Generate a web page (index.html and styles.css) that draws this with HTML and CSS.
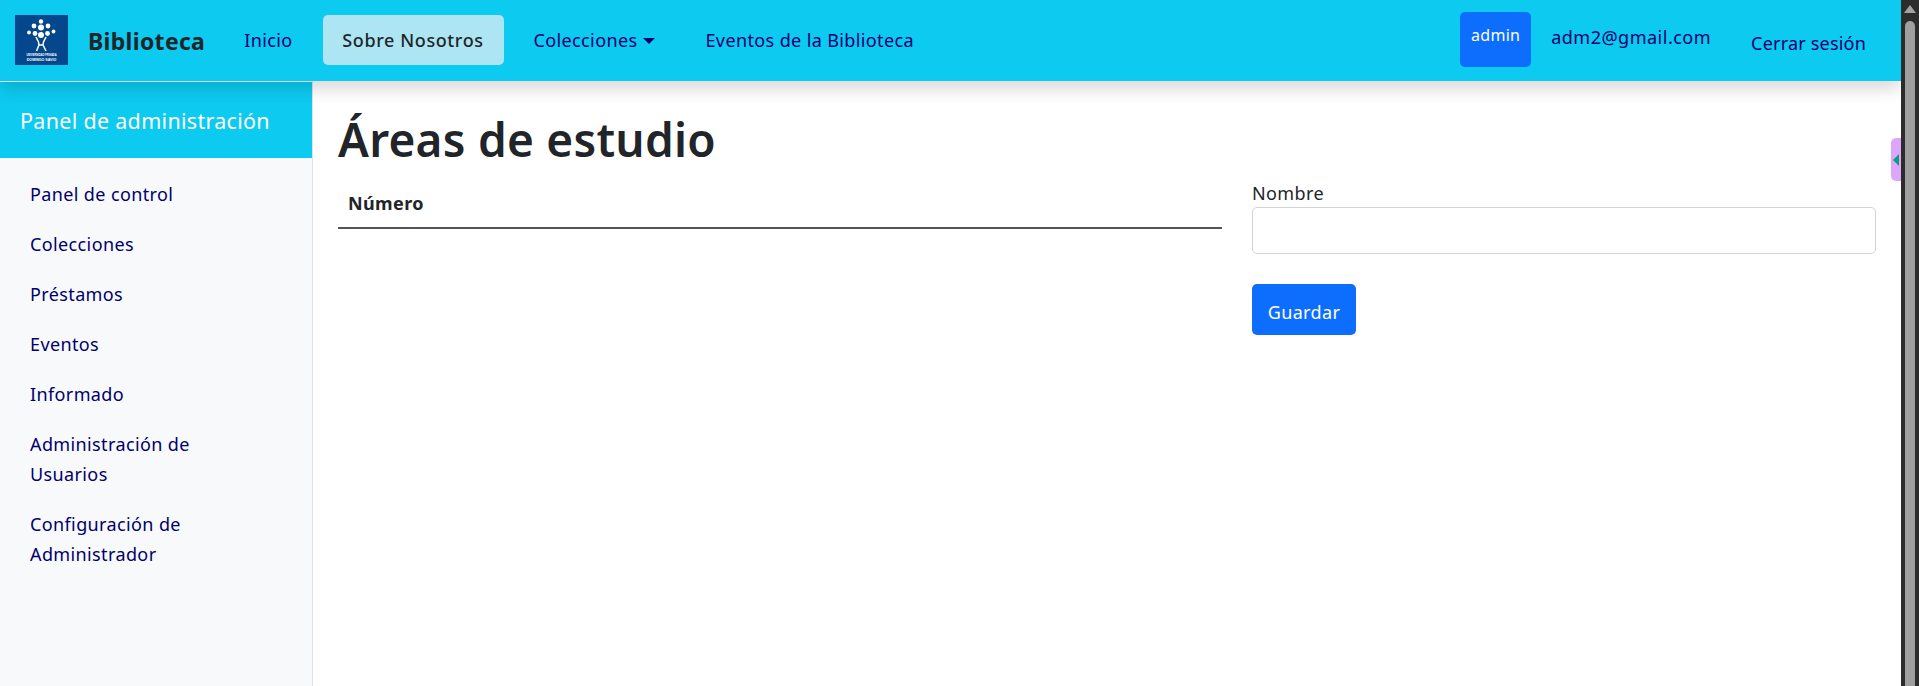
FILE: index.html
```html
<!DOCTYPE html>
<html lang="es">
<head>
<meta charset="utf-8">
<title>Áreas de estudio</title>
<link rel="stylesheet" href="styles.css">
</head>
<body>
<div class="shell">
  <div class="page">
    <header class="navbar">
      <svg class="logo" viewBox="0 0 53 50" role="img" aria-label="Universidad Privada Domingo Savio">
        <rect width="53" height="50" fill="#04478c"/>
        <g fill="#fff">
          <circle cx="26" cy="6.5" r="2.2"/>
          <circle cx="19" cy="11" r="2.4"/><circle cx="26" cy="12.5" r="3"/><circle cx="33" cy="11" r="2.4"/>
          <circle cx="14" cy="17.5" r="1.9"/><circle cx="20" cy="18.5" r="2.4"/><circle cx="26" cy="20" r="3"/><circle cx="32.5" cy="18.5" r="2.4"/><circle cx="38.5" cy="16.5" r="1.9"/>
          <text class="logo-a" x="26.5" y="40.5" text-anchor="middle">UNIVERSIDAD PRIVADA</text>
          <text class="logo-b" x="26.5" y="45.5" text-anchor="middle">DOMINGO SAVIO</text>
        </g>
        <path d="M21 22l2.5 5 .5 3-2.5 6M31 22l-2.5 5-.5 3 3 6M24 30h4" fill="none" stroke="#fff" stroke-width="1.5"/>
      </svg>
      <a class="brand">Biblioteca</a>
      <nav class="nav-main">
        <a class="nav-link">Inicio</a>
        <a class="nav-link nav-active">Sobre Nosotros</a>
        <a class="nav-link">Colecciones<span class="caret"></span></a>
        <a class="nav-link">Eventos de la Biblioteca</a>
      </nav>
      <div class="nav-user">
        <a class="role-btn">admin</a>
        <a class="nav-link email">adm2@gmail.com</a>
        <a class="nav-link logout">Cerrar sesión</a>
      </div>
    </header>
    <div class="body-row">
      <aside class="sidebar">
        <div class="side-head">Panel de administración</div>
        <ul class="side-list">
          <li><a>Panel de control</a></li>
          <li><a>Colecciones</a></li>
          <li><a>Préstamos</a></li>
          <li><a>Eventos</a></li>
          <li><a>Informado</a></li>
          <li><a>Administración de Usuarios</a></li>
          <li><a>Configuración de Administrador</a></li>
        </ul>
      </aside>
      <main class="content">
        <h1 class="title">Áreas de estudio</h1>
        <div class="columns">
          <table class="table">
            <thead><tr><th>Número</th></tr></thead>
          </table>
          <form class="form">
            <label class="label" for="nombre">Nombre</label>
            <input class="input" id="nombre" type="text">
            <button class="save" type="button">Guardar</button>
          </form>
        </div>
      </main>
    </div>
    <div class="side-tab"><span class="tab-arrow"></span></div>
  </div>
  <div class="scrollbar">
    <span class="sb-up"></span>
    <span class="sb-thumb"></span>
  </div>
</div>
</body>
</html>
```

FILE: styles.css
```css
* { box-sizing: border-box; }
html, body { margin: 0; height: 100%; overflow: hidden; }
body { font-family: "Noto Sans", "Open Sans", sans-serif; font-size: 18px; letter-spacing: .38px; line-height: 30px; color: #212529; background: #fff; }
a { color: #00006e; text-decoration: none; }

.shell { display: flex; height: 686px; }
.page { position: relative; flex: 1; min-width: 0; display: flex; flex-direction: column; overflow: hidden; }

.navbar { position: relative; z-index: 2; height: 81px; flex: none; display: flex; align-items: center; padding: 0 15px; background: #0dcaf0; box-shadow: 0 8px 16px rgba(0,0,0,.15); }
.logo { width: 53px; height: 50px; flex: none; margin-top: -2px; }
.logo-a { font: 700 2.6px "Liberation Sans", sans-serif; letter-spacing: 0; }
.logo-b { font: 700 3.6px "Liberation Sans", sans-serif; letter-spacing: 0; }
.brand { margin-left: 20px; margin-right: 19px; font-size: 23px; font-weight: 700; letter-spacing: .3px; color: #212529; }
.nav-main { display: flex; gap: 10px; margin-top: -2px; }
.nav-link { display: block; padding: 10px 20px; white-space: nowrap; }
.nav-active { width: 181px; padding: 10px 0; text-align: center; background: #aee5f2; border-radius: 5px; color: #212529; font-weight: 500; letter-spacing: .6px; }
.caret { display: inline-block; margin-left: 6px; vertical-align: 3px; border-top: 6px solid; border-left: 6px solid transparent; border-right: 6px solid transparent; }
.nav-user { margin-left: auto; display: flex; align-items: flex-start; }
.role-btn { width: 71px; height: 55px; margin-top: -2px; padding-top: 8px; text-align: center; font-size: 16px; line-height: 30px; letter-spacing: .3px; color: #fff; background: #0d6efd; border-radius: 5px; }
.email { padding-top: 8px; padding-bottom: 0; letter-spacing: .5px; }
.logout { padding-top: 14px; padding-bottom: 0; letter-spacing: .2px; }

.body-row { flex: 1; display: flex; min-height: 0; }
.sidebar { width: 313px; flex: none; background: #f8f9fa; border-right: 1px solid #dee2e6; padding-top: 1px; }
.side-head { height: 76px; display: flex; align-items: center; padding-left: 20px; padding-top: 1px; font-size: 21.5px; letter-spacing: .3px; color: #fff; background: #0dcaf0; }
.side-list { list-style: none; margin: 0; padding: 11px 0 0 30px; }
.side-list li { padding: 10px 0; max-width: 200px; }

.content { flex: 1; min-width: 0; padding: 27px 25px 0 25px; }
.title { margin: 0; font-size: 46px; line-height: 62px; font-weight: 600; letter-spacing: .25px; }
.columns { display: flex; gap: 30px; margin-top: 11px; }
.table { flex: 0 0 884px; width: 884px; height: 48px; border-collapse: collapse; border-bottom: 2px solid #555; }
.table th { padding: 6px 10px 9px; text-align: left; font-weight: 700; }
.form { flex: 1; min-width: 0; display: flex; flex-direction: column; align-items: flex-start; }
.label { display: block; line-height: 24px; }
.input { display: block; width: 100%; height: 47px; margin-top: 2px; border: 1px solid #ced4da; border-radius: 5px; background: #fff; }
.save { margin-top: 30px; width: 104px; height: 51px; padding: 5px 0 0; font: inherit; letter-spacing: inherit; color: #fff; background: #0d6efd; border: 0; border-radius: 5px; }

.side-tab { position: absolute; right: 0; top: 138px; width: 10px; height: 43px; display: flex; align-items: center; background: #dca6fb; border-radius: 5px 0 0 5px; }
.tab-arrow { margin-left: 2px; border-right: 6px solid #0a9e83; border-top: 6px solid transparent; border-bottom: 6px solid transparent; }

.scrollbar { width: 18px; flex: none; display: flex; flex-direction: column; align-items: center; padding-top: 5px; background: #2c2c2c; }
.sb-up { flex: none; border-bottom: 8px solid #a2a2a2; border-left: 6px solid transparent; border-right: 6px solid transparent; }
.sb-thumb { flex: 1; width: 10px; margin-top: 8px; background: #9f9f9f; border-radius: 5px 5px 0 0; }
```
